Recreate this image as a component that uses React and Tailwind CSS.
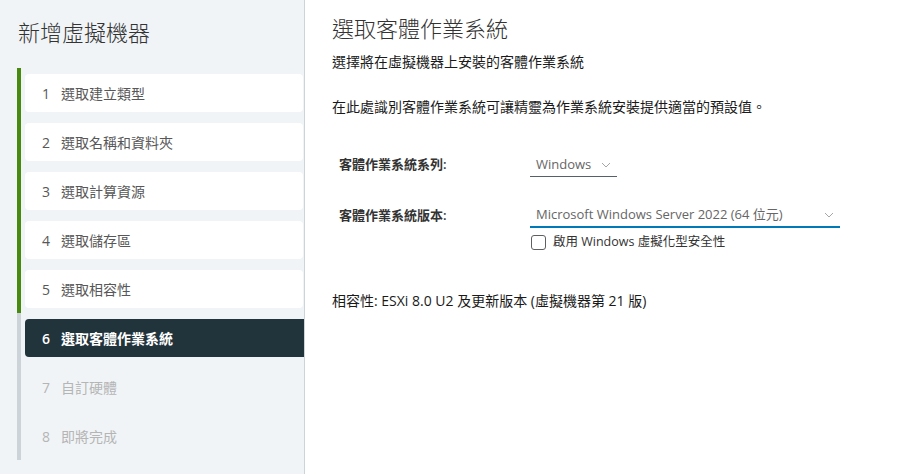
import React from "react";

const STEPS = [
  { n: 1, label: "選取建立類型", state: "done" },
  { n: 2, label: "選取名稱和資料夾", state: "done" },
  { n: 3, label: "選取計算資源", state: "done" },
  { n: 4, label: "選取儲存區", state: "done" },
  { n: 5, label: "選取相容性", state: "done" },
  { n: 6, label: "選取客體作業系統", state: "active" },
  { n: 7, label: "自訂硬體", state: "todo" },
  { n: 8, label: "即將完成", state: "todo" },
];

const FONT = { fontFamily: '"Open Sans", "Noto Sans CJK TC", sans-serif' };

const Chevron = () => (
  <svg width="10" height="6" viewBox="0 0 10 6" fill="none">
    <path d="M1 1l4 4 4-4" stroke="#a6a6a6" strokeWidth="1" />
  </svg>
);

const StepRow = ({ step }) => {
  const bar = step.state === "done" ? "bg-[#48890f]" : "bg-[#ccd4d9]";
  let card = "bg-white text-[#575757] rounded-[4px] mr-px";
  if (step.state === "active") card = "bg-[#21333b] text-white font-semibold rounded-l-[4px]";
  if (step.state === "todo") card = "text-[#b5b5b5]";
  return (
    <div className="flex">
      <div className={`w-[4px] ${bar}`} />
      <div className="flex-1 pl-[4px] pt-[6px] pb-[5px]">
        <div className={`h-[38px] flex items-center pl-[17px] text-[14px] ${card}`}>
          <span className="w-[19px]">{step.n}</span>
          <span>{step.label}</span>
        </div>
      </div>
    </div>
  );
};

export default function App() {
  return (
    <div className="w-[902px] h-[474px] flex bg-white overflow-hidden" style={FONT}>
      <div className="w-[305px] h-full bg-[#f0f4f7] border-r border-[#cdd4d9] shrink-0">
        <div className="pl-[18px] pt-[17px] h-[68px] text-[22px] leading-[30px] font-light text-[#333]">
          新增虛擬機器
        </div>
        <div className="ml-[17px]">
          {STEPS.map((s) => (
            <StepRow key={s.n} step={s} />
          ))}
        </div>
      </div>

      <div className="flex-1 pl-[27px] text-[#333]">
        <h1 className="pt-[13px] text-[22px] leading-[30px] font-light text-[#333]">選取客體作業系統</h1>
        <p className="mt-[9px] text-[14px] leading-[20px] text-[#1a1a1a]">選擇將在虛擬機器上安裝的客體作業系統</p>
        <p className="mt-[25px] text-[14px] leading-[20px] text-[#1a1a1a]">
          在此處識別客體作業系統可讓精靈為作業系統安裝提供適當的預設值。
        </p>

        <div className="mt-[37px] flex items-start">
          <div className="w-[198px] pl-[7px] text-[13px] leading-[20px] font-semibold text-[#333]">客體作業系統系列:</div>
          <div className="w-[87px] h-[24px] border-b border-[#55606a] flex items-center justify-between pl-[6px] pr-[6px] mt-[-1px]">
            <span className="text-[13px] text-[#666]">Windows</span>
            <Chevron />
          </div>
        </div>

        <div className="mt-[28px] flex items-start">
          <div className="w-[198px] pl-[7px] text-[13px] leading-[20px] font-semibold text-[#333]">客體作業系統版本:</div>
          <div>
            <div className="w-[310px] h-[24px] border-b-2 border-[#0079b8] flex items-center justify-between pl-[6px] pr-[6px] mt-[-1px]">
              <span className="text-[13px] text-[#666]">Microsoft Windows Server 2022 (64 位元)</span>
              <Chevron />
            </div>
            <label className="mt-[5px] flex items-center gap-[7px] pl-px">
              <span className="w-[15px] h-[15px] border border-[#5f5f5f] rounded-[3px] bg-white" />
              <span className="text-[12.5px] leading-[18px] text-[#333]">啟用 Windows 虛擬化型安全性</span>
            </label>
          </div>
        </div>

        <p className="mt-[40px] text-[14px] leading-[20px] text-[#1a1a1a]">
          相容性: ESXi 8.0 U2 及更新版本 (虛擬機器第 21 版)
        </p>
      </div>
    </div>
  );
}
